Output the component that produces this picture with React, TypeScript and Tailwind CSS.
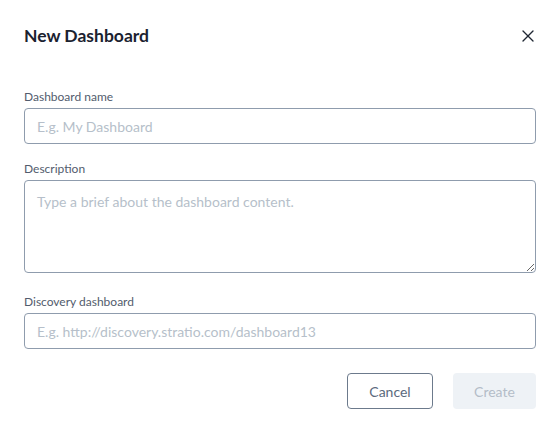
import { X } from "lucide-react";

const Field = ({ label, placeholder, multiline }: any) => {
  return (
    <div className="flex flex-col">
      <label className="text-[12px] leading-4 text-[#525c6d] mb-[3px]">{label}</label>
      {multiline ? (
        <textarea
          placeholder={placeholder}
          className="block h-[93px] w-full rounded-[4px] border border-[#8f9cad] px-3 py-[11px] text-[14px] leading-5 placeholder:text-[#b6bfca] outline-none"
        />
      ) : (
        <input
          placeholder={placeholder}
          className="block h-9 w-full rounded-[4px] border border-[#8f9cad] px-3 text-[14px] placeholder:text-[#b6bfca] outline-none"
        />
      )}
    </div>
  );
};

export default function App() {
  return (
    <div
      className="w-[560px] h-[431px] bg-white px-6 pt-6"
      style={{ fontFamily: "Lato, 'Open Sans', sans-serif" }}
    >
      <div className="flex items-center justify-between h-6">
        <h1 className="text-[17.5px] leading-6 font-bold text-[#1b2230]">New Dashboard</h1>
        <button className="-mr-[2px] text-[#1f2733]">
          <X size={20} strokeWidth={1.6} />
        </button>
      </div>
      <div className="mt-[41px] flex flex-col">
        <Field label="Dashboard name" placeholder="E.g. My Dashboard" />
        <div className="mt-[17px]">
          <Field
            label="Description"
            placeholder="Type a brief about the dashboard content."
            multiline
          />
        </div>
        <div className="mt-[21px]">
          <Field
            label="Discovery dashboard"
            placeholder="E.g. http://discovery.stratio.com/dashboard13"
          />
        </div>
      </div>
      <div className="mt-6 flex justify-end gap-5">
        <button className="h-9 w-[86px] rounded-[4px] border border-[#6c7a8c] text-[14px] text-[#5b6a7d]">
          Cancel
        </button>
        <button className="h-9 w-[83px] rounded-[4px] bg-[#eef2f6] text-[14px] text-[#b4bdc8]">
          Create
        </button>
      </div>
    </div>
  );
}
